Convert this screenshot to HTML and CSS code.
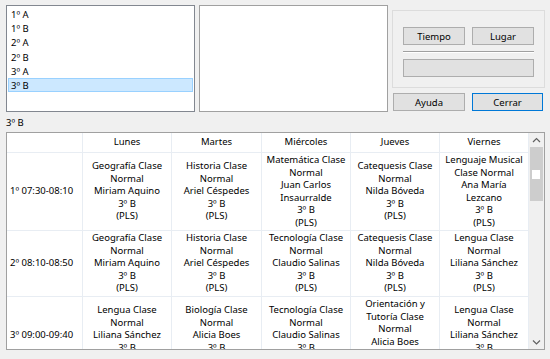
FILE: index.html
```html
<!DOCTYPE html>
<html lang="es">
<head>
    <meta charset="UTF-8">
    <title>Horario</title>
    <link rel="stylesheet" href="styles.css">
</head>
<body>

    <div class="top">
        <ul class="listbox courses">
            <li>1º A</li>
            <li>1º B</li>
            <li>2º A</li>
            <li>2º B</li>
            <li>3º A</li>
            <li class="selected">3º B</li>
        </ul>
        <div class="listbox groups"></div>
        <div class="side">
            <div class="group">
                <div class="btn-row">
                    <button class="btn">Tiempo</button>
                    <button class="btn">Lugar</button>
                </div>
                <div class="sep"></div>
                <button class="btn wide"></button>
            </div>
            <div class="bottom">
                <button class="btn help">Ayuda</button>
                <button class="btn close">Cerrar</button>
            </div>
        </div>
    </div>

    <div class="caption">3º B</div>

    <div class="schedule">
        <div class="grid-wrap">
            <table class="grid">
                <colgroup>
                    <col class="c-hour">
                    <col class="c-day">
                    <col class="c-day2">
                    <col class="c-day">
                    <col class="c-day">
                    <col class="c-day">
                </colgroup>
                <tr class="head">
                    <td></td>
                    <td>Lunes</td>
                    <td>Martes</td>
                    <td>Miércoles</td>
                    <td>Jueves</td>
                    <td>Viernes</td>
                </tr>
                <tr class="r6">
                    <td class="hour">1º 07:30-08:10</td>
                    <td>Geografía Clase<br>Normal<br>Miriam Aquino<br>3º B<br>(PLS)</td>
                    <td>Historia Clase<br>Normal<br>Ariel Céspedes<br>3º B<br>(PLS)</td>
                    <td>Matemática Clase<br>Normal<br>Juan Carlos<br>Insaurralde<br>3º B<br>(PLS)</td>
                    <td>Catequesis Clase<br>Normal<br>Nilda Bóveda<br>3º B<br>(PLS)</td>
                    <td>Lenguaje Musical<br>Clase Normal<br>Ana María<br>Lezcano<br>3º B<br>(PLS)</td>
                </tr>
                <tr class="r5">
                    <td class="hour">2º 08:10-08:50</td>
                    <td>Geografía Clase<br>Normal<br>Miriam Aquino<br>3º B<br>(PLS)</td>
                    <td>Historia Clase<br>Normal<br>Ariel Céspedes<br>3º B<br>(PLS)</td>
                    <td>Tecnología Clase<br>Normal<br>Claudio Salinas<br>3º B<br>(PLS)</td>
                    <td>Catequesis Clase<br>Normal<br>Nilda Bóveda<br>3º B<br>(PLS)</td>
                    <td>Lengua Clase<br>Normal<br>Liliana Sánchez<br>3º B<br>(PLS)</td>
                </tr>
                <tr class="r6">
                    <td class="hour">3º 09:00-09:40</td>
                    <td>Lengua Clase<br>Normal<br>Liliana Sánchez<br>3º B<br>(PLS)</td>
                    <td>Biología Clase<br>Normal<br>Alicia Boes<br>3º B<br>(PLS)</td>
                    <td>Tecnología Clase<br>Normal<br>Claudio Salinas<br>3º B<br>(PLS)</td>
                    <td>Orientación y<br>Tutoría Clase<br>Normal<br>Alicia Boes<br>3º B<br>(PLS)</td>
                    <td>Lengua Clase<br>Normal<br>Liliana Sánchez<br>3º B<br>(PLS)</td>
                </tr>
            </table>
        </div>
        <div class="scrollbar">
            <svg class="arrow" width="15" height="14" viewBox="0 0 15 14">
                <path d="M4 9 L7.5 5.5 L11 9" fill="none" stroke="#606060" stroke-width="1.2"/>
            </svg>
            <div class="thumb"><span class="grip"></span></div>
            <div class="track"></div>
            <svg class="arrow" width="15" height="14" viewBox="0 0 15 14">
                <path d="M4 5.5 L7.5 9 L11 5.5" fill="none" stroke="#606060" stroke-width="1.2"/>
            </svg>
        </div>
    </div>

</body>
</html>
```

FILE: styles.css
```css
body {
    margin: 0;
    width: 550px;
    height: 359px;
    overflow: hidden;
    background-color: #f0f0f0;
    font-family: "Noto Sans", sans-serif;
    font-size: 9.5px;
    color: #000;
}

.top {
    display: flex;
    padding: 5px 0 0 6px;
    height: 107px;
}

.listbox {
    box-sizing: border-box;
    width: 189px;
    height: 107px;
    background: white;
    border: 1px solid #828790;
}

.courses {
    list-style: none;
    margin: 0;
    padding: 1px 1px 0;
}

.courses li {
    box-sizing: border-box;
    height: 14.2px;
    line-height: 12px;
    padding: 1px 2px;
    border: 1px solid transparent;
}

.courses li.selected {
    background-color: #cce8ff;
    border-color: #99d1ff;
}

.groups {
    margin-left: 4px;
    border-color: #a0a0a0;
}

.side {
    margin-left: 4px;
    width: 153px;
}

.group {
    box-sizing: border-box;
    height: 78px;
    margin-top: 5px;
    padding: 16px 10px 0;
    border: 1px solid #dcdcdc;
}

.btn-row {
    display: flex;
    gap: 7px;
}

.btn {
    box-sizing: border-box;
    height: 18px;
    width: 62px;
    padding: 0;
    background-color: #e1e1e1;
    border: 1px solid #adadad;
    font-family: "Noto Sans", sans-serif;
    font-size: 9.5px;
    color: #000;
}

.sep {
    margin: 6px 0;
    border-top: 1px solid #a0a0a0;
    border-bottom: 1px solid white;
}

.btn.wide {
    display: block;
    width: 131px;
}

.bottom {
    display: flex;
    gap: 7px;
    margin-top: 5px;
    padding-left: 1px;
}

.btn.help {
    width: 72px;
}

.btn.close {
    width: 71px;
    border-color: #0078d7;
}

.caption {
    margin-top: 5px;
    padding-left: 6px;
    height: 12px;
    line-height: 12px;
}

.schedule {
    box-sizing: border-box;
    display: flex;
    width: 539px;
    height: 218px;
    margin: 3px 0 0 6px;
    border: 1px solid #a0a0a0;
    background: white;
}

.grid-wrap {
    width: 522px;
    overflow: hidden;
}

.grid {
    table-layout: fixed;
    width: 522px;
    border-collapse: separate;
    border-spacing: 0;
}

.c-hour { width: 76px; }
.c-day { width: 89px; }
.c-day2 { width: 90px; }

.grid td {
    padding: 1px 2px;
    border-right: 1px solid #e8edf3;
    border-bottom: 1px solid #e8edf3;
    text-align: center;
    vertical-align: middle;
    line-height: 12.5px;
    white-space: nowrap;
}

.grid .head td {
    height: 17px;
}

.grid .r6 td {
    height: 75px;
}

.grid .r5 td {
    height: 63px;
}

.grid td.hour {
    text-align: left;
    padding-left: 3px;
}

.scrollbar {
    display: flex;
    flex-direction: column;
    width: 15px;
    background-color: #f0f0f0;
}

.arrow {
    display: block;
    flex: none;
}

.thumb {
    flex: none;
    position: relative;
    height: 54px;
    margin: 0 1px;
    background-color: #cdcdcd;
}

.grip {
    position: absolute;
    left: 2px;
    top: 23px;
    width: 8px;
    height: 9px;
    background: white;
}

.track {
    flex: 1;
}
```
